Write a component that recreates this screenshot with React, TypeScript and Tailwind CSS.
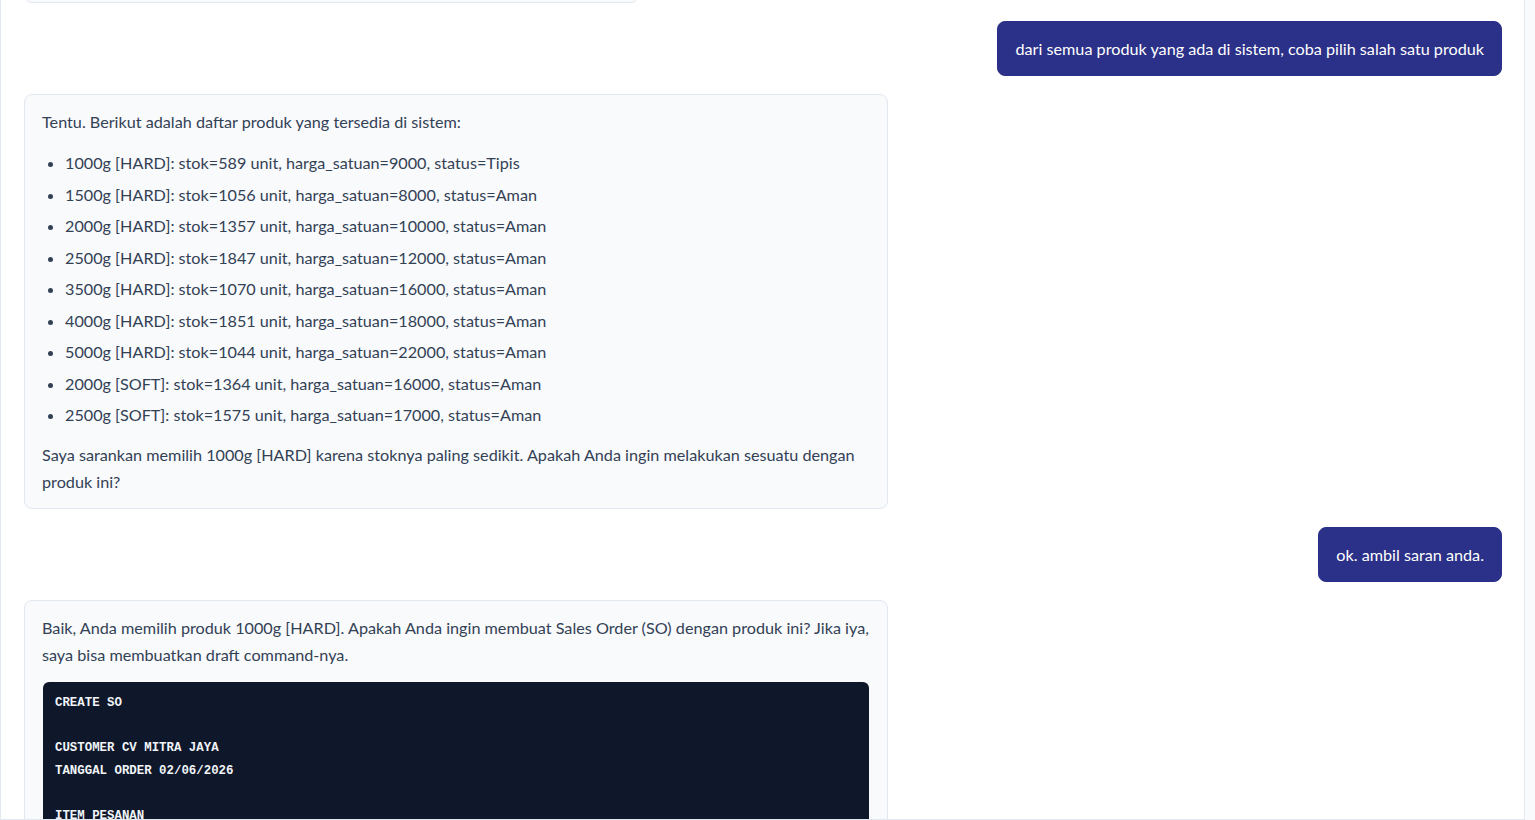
const products = [
  "1000g [HARD]: stok=589 unit, harga_satuan=9000, status=Tipis",
  "1500g [HARD]: stok=1056 unit, harga_satuan=8000, status=Aman",
  "2000g [HARD]: stok=1357 unit, harga_satuan=10000, status=Aman",
  "2500g [HARD]: stok=1847 unit, harga_satuan=12000, status=Aman",
  "3500g [HARD]: stok=1070 unit, harga_satuan=16000, status=Aman",
  "4000g [HARD]: stok=1851 unit, harga_satuan=18000, status=Aman",
  "5000g [HARD]: stok=1044 unit, harga_satuan=22000, status=Aman",
  "2000g [SOFT]: stok=1364 unit, harga_satuan=16000, status=Aman",
  "2500g [SOFT]: stok=1575 unit, harga_satuan=17000, status=Aman",
];

const draft = `CREATE SO

CUSTOMER CV MITRA JAYA
TANGGAL ORDER 02/06/2026

ITEM PESANAN
- 1000g [HARD] QTY 100

CATATAN -`;

function UserBubble({ text }: { text: string }) {
  return (
    <div className="flex justify-end">
      <div className="max-w-[864px] rounded-lg border border-[#2b3088] bg-[#2b3088] px-[17px] py-[13px] text-white">
        {text}
      </div>
    </div>
  );
}

function BotBubble({ children }: { children: React.ReactNode }) {
  return (
    <div className="flex justify-start">
      <div className="max-w-[864px] rounded-lg border border-[#e2e8f0] bg-[#f8fafc] px-[17px] py-[13px] text-[#334155]">
        {children}
      </div>
    </div>
  );
}

export default function App() {
  return (
    <div
      className="flex h-[820px] w-full overflow-hidden bg-[#f8fafc] text-[16.2px] leading-[27px]"
      style={{ fontFamily: "Lato, 'Noto Sans', sans-serif" }}
    >
      <main className="h-full w-[1525px] shrink-0 overflow-hidden border-x border-b border-[#e2e8f0] bg-white">
        <div className="flex flex-col gap-[18px] pl-[23px] pr-[22px]">
          {/* previous message, scrolled away */}
          <div className="-mt-[37px] h-[40px] w-[615px] rounded-lg border border-[#e2e8f0] bg-[#f8fafc]" />

          <UserBubble text="dari semua produk yang ada di sistem, coba pilih salah satu produk" />

          <BotBubble>
            <p>Tentu. Berikut adalah daftar produk yang tersedia di sistem:</p>
            <ul className="mt-[14px] mb-[13px] list-disc pl-[23px]">
              {products.map((p) => (
                <li key={p} className="my-[4.5px]">
                  {p}
                </li>
              ))}
            </ul>
            <p>
              Saya sarankan memilih 1000g [HARD] karena stoknya paling sedikit. Apakah Anda ingin melakukan sesuatu dengan
              produk ini?
            </p>
          </BotBubble>

          <UserBubble text="ok. ambil saran anda." />

          <BotBubble>
            <p>
              Baik, Anda memilih produk 1000g [HARD]. Apakah Anda ingin membuat Sales Order (SO) dengan produk ini? Jika iya,
              saya bisa membuatkan draft command-nya.
            </p>
            <pre
              className="mx-px mt-[14px] rounded-md bg-[#0f172a] px-[12px] pt-[10px] pb-[10px] text-[12.4px] font-bold leading-[22.5px] text-[#f1f5f9]"
              style={{ fontFamily: "'Liberation Mono', 'DejaVu Sans Mono', monospace" }}
            >
              {draft}
            </pre>
          </BotBubble>
        </div>
      </main>
    </div>
  );
}
